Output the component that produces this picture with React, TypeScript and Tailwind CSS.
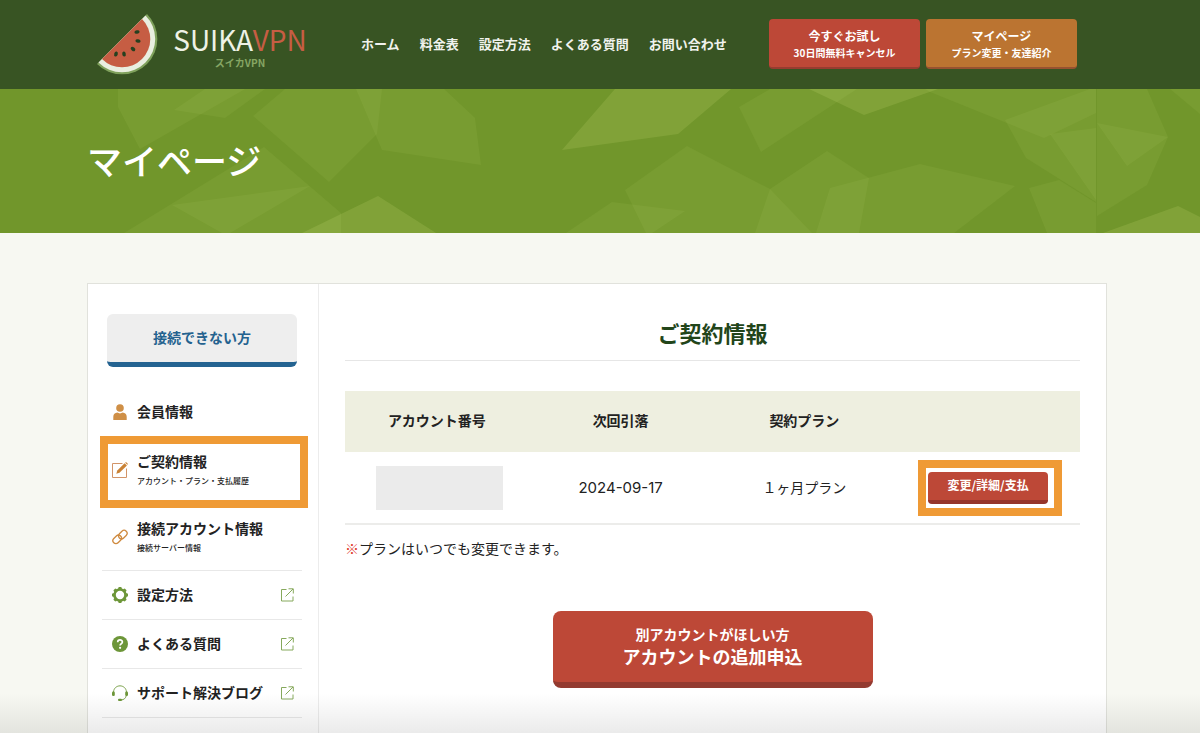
import { type ReactNode } from 'react';

const NAV_ITEMS = ['ホーム', '料金表', '設定方法', 'よくある質問', 'お問い合わせ'];

/** ヘッダー下の多角形模様 */
const BANNER_SHAPES = [
  '118,0 118,18 140,60 245,0',
  '205,0 174,21 225,29 265,0',
  '285,0 253,27 329,93 377,45 382,0',
  '356,0 382,61 481,76 475,29 444,0',
  '124,144 264,58 341,124 341,144',
  '172,116 310,97 230,144 222,144',
  '566,144 612,113 685,122 652,144',
  '739,18 770,0 857,0 761,63',
  '625,101 687,57 770,100 812,144 646,144',
  '755,144 770,100 827,62 869,89 859,144',
  '816,144 830,99 920,75 1015,97 954,144',
  '925,0 930,3 1044,49 1096,24 1096,0',
  '1005,31 1090,0 1096,0 1096,113 1026,69',
  '1050,45 1096,39 1096,111',
  '1029,99 1059,91 1096,114 1096,144 1047,144',
  '1097,0 1147,0 1168,48 1147,96 1097,127',
  '1097,34 1168,48 1127,77',
  '1170,0 1200,25 1200,0',
];

const BANNER_BRIGHT_SHAPES = [
  '302,144 378,107 436,144',
  '562,61 615,0 731,0 678,45',
  '809,0 864,26 938,0',
  '1103,144 1178,117 1200,128 1200,144',
];

const SEEDS = [
  { x: 41, y: 19, r: -10 },
  { x: 42, y: 28, r: 10 },
  { x: 37, y: 36, r: 40 },
  { x: 28, y: 41, r: 80 },
  { x: 20, y: 41, r: 105 },
];

const Melon = () => (
  <svg viewBox="0 0 62 62" className="size-[62px] shrink-0" aria-hidden="true">
    <path d="M1 51A35.2 35.2 0 0 0 51 1Z" fill="#7fa15c" />
    <path d="M2.5 49.5A33 33 0 0 0 49.5 2.5Z" fill="#e9eee0" />
    <path d="M6 46A28 28 0 0 0 46 6Z" fill="#c65d43" />
    {SEEDS.map((s) => (
      <ellipse
        key={`${s.x}-${s.y}`}
        cx={s.x}
        cy={s.y}
        rx="2.6"
        ry="1.8"
        fill="#26401f"
        transform={`rotate(${s.r} ${s.x} ${s.y})`}
      />
    ))}
  </svg>
);

const UserIcon = () => (
  <svg viewBox="0 0 16 16" className="size-4" fill="#cf8f46" aria-hidden="true">
    <circle cx="8" cy="4" r="3.8" />
    <path d="M1.3 16v-3.2c0-2.4 1.6-4 4-4.2.8.5 1.7.8 2.7.8s1.9-.3 2.7-.8c2.4.2 4 1.8 4 4.2V16z" />
  </svg>
);

const EditIcon = () => (
  <svg viewBox="0 0 16 16" className="size-4" aria-hidden="true">
    <path d="M10.5 1.5H.5v14h14V6.5" fill="none" stroke="#d29468" />
    <path d="M4.3 11.7l1-3.2 7.300-7.300 2.300 2.200-7.400 7.300z" fill="#c98236" />
    <path d="M13.200.7l.8-.7 2 2-.7.8z" fill="#c98236" />
  </svg>
);

const LinkIcon = () => (
  <svg viewBox="0 0 16 16" className="size-4" fill="none" stroke="#cf8a3f" strokeWidth="1.3" aria-hidden="true">
    <rect x="6" y="2.600" width="9.600" height="6" rx="3" transform="rotate(-45 10.800 5.600)" />
    <rect x=".4" y="7.400" width="9.600" height="6" rx="3" transform="rotate(-45 5.200 10.400)" />
  </svg>
);

const GearIcon = () => (
  <svg viewBox="0 0 16 16" className="size-4" aria-hidden="true">
    <circle cx="8" cy="8" r="5.500" fill="none" stroke="#6d9639" strokeWidth="2.600" />
    {[0, 45, 90, 135, 180, 225, 270, 315].map((angle) => (
      <path key={angle} d="M6 2L6.700 0h2.600L10 2z" fill="#6d9639" transform={`rotate(${angle} 8 8)`} />
    ))}
  </svg>
);

const QuestionIcon = () => (
  <svg viewBox="0 0 16 16" className="size-4" aria-hidden="true">
    <circle cx="8" cy="8" r="8" fill="#6d9639" />
    <path d="M5.700 6.200c0-3 4.700-2.900 4.700-.2 0 1.800-2.300 1.700-2.300 3.500" fill="none" stroke="#fff" strokeWidth="1.700" />
    <circle cx="8.100" cy="11.800" r="1.100" fill="#fff" />
  </svg>
);

const HeadsetIcon = () => (
  <svg viewBox="0 0 16 16" className="size-4" aria-hidden="true">
    <path d="M1.500 7C2.200-1.200 13.800-1.200 14.500 7M14.300 10.500c-.5 2.700-2.500 4.300-5 4.500" fill="none" stroke="#7ba24b" />
    <rect x="0" y="6.500" width="2.800" height="4.500" rx="1.200" fill="#6d9639" />
    <rect x="13.200" y="6.500" width="2.800" height="4.500" rx="1.200" fill="#6d9639" />
    <rect x="6" y="13.800" width="4" height="2.200" rx="1.100" fill="#6d9639" />
  </svg>
);

const ExternalIcon = () => (
  <svg viewBox="0 0 14 14" className="size-3.5" fill="none" stroke="#86a95c" aria-hidden="true">
    <path d="M6.500 1.500h-5v11.500h11.500V8.500M5.500 8.500l7.500-7.500M8.500.8h4.800V5.500" />
  </svg>
);

interface MenuItem {
  label: string;
  sub?: string;
  icon: ReactNode;
  external?: boolean;
  highlighted?: boolean;
}

const MENU_ITEMS: MenuItem[] = [
  { label: '会員情報', icon: <UserIcon /> },
  { label: 'ご契約情報', sub: 'アカウント・プラン・支払履歴', icon: <EditIcon />, highlighted: true },
  { label: '接続アカウント情報', sub: '接続サーバー情報', icon: <LinkIcon /> },
  { label: '設定方法', icon: <GearIcon />, external: true },
  { label: 'よくある質問', icon: <QuestionIcon />, external: true },
  { label: 'サポート解決ブログ', icon: <HeadsetIcon />, external: true },
];

const Header = () => (
  <header className="bg-[#385423] pr-1.5">
    <div className="mx-auto flex h-[89px] max-w-[1020px] items-center pr-[30px] pb-0.5 pl-[9px]">
      <a href="#" className="flex items-center gap-[14px] text-[#eef2e6]">
        <Melon />
        <span className="flex w-[136px] flex-col items-center pt-1.5">
          <span className="text-[28px] leading-8 whitespace-nowrap">
            SUIKA<span className="text-[#c65d43]">VPN</span>
          </span>
          <span className="text-[10px] leading-4 font-bold text-[#86a663]">スイカVPN</span>
        </span>
      </a>
      <nav className="ml-[53px] flex gap-5 text-[13px] font-bold whitespace-nowrap text-[#f0f2ed]">
        {NAV_ITEMS.map((item) => (
          <a key={item} href="#">
            {item}
          </a>
        ))}
      </nav>
      <div className="ml-auto flex gap-1.5 text-center font-bold text-white">
        <a
          href="#"
          className="flex h-[50px] w-[151px] flex-col justify-center rounded border-b-2 border-[#963c30] bg-[#bd4837] pt-0.5"
        >
          <span className="text-xs leading-[18px]">今すぐお試し</span>
          <span className="text-[10px] leading-4">30日間無料キャンセル</span>
        </a>
        <a
          href="#"
          className="flex h-[50px] w-[151px] flex-col justify-center rounded border-b-2 border-[#975230] bg-[#bb7431] pt-0.5"
        >
          <span className="text-xs leading-[18px]">マイページ</span>
          <span className="text-[10px] leading-4">プラン変更・友達紹介</span>
        </a>
      </div>
    </div>
  </header>
);

const Banner = () => (
  <div className="relative h-36 bg-[#71962b] pr-1.5">
    <svg
      viewBox="0 0 1200 144"
      preserveAspectRatio="xMidYMid slice"
      className="absolute inset-0 size-full"
      fill="#f4ff9a"
      aria-hidden="true"
    >
      {BANNER_SHAPES.map((points) => (
        <polygon key={points} points={points} fillOpacity="0.06" />
      ))}
      {BANNER_BRIGHT_SHAPES.map((points) => (
        <polygon key={points} points={points} fillOpacity="0.12" />
      ))}
    </svg>
    <div className="relative mx-auto flex h-full max-w-[1020px] items-center pb-0.5">
      <h1 className="text-[35px] leading-10 font-medium text-white">マイページ</h1>
    </div>
  </div>
);

const Sidebar = () => (
  <aside className="w-[231px] shrink-0 border-r border-[#ececec] pt-[30px]">
    <a
      href="#"
      className="mr-[21px] ml-[19px] flex h-[53px] items-center justify-center rounded-md border-b-[5px] border-[#246391] bg-[#eee] pb-0.5 text-sm font-bold text-[#24628f]"
    >
      接続できない方
    </a>
    <ul className="mt-[21px] ml-3.5 w-[200px]">
      {MENU_ITEMS.map((item) => (
        <li key={item.label} className="relative border-b border-[#e8e8e8] first:border-transparent">
          <a
            href="#"
            className={`flex items-center gap-[9px] pr-2 pl-2.5 text-[#222] ${item.sub ? 'h-[66px]' : 'h-12'}`}
          >
            {item.icon}
            <span className="flex flex-1 flex-col pb-0.5 whitespace-nowrap">
              <span className="text-sm leading-6 font-bold">{item.label}</span>
              {item.sub && <span className="text-[8px] leading-4 font-medium">{item.sub}</span>}
            </span>
            {item.external && <ExternalIcon />}
          </a>
          {item.highlighted && (
            <span className="pointer-events-none absolute -top-px -right-1.5 -bottom-[5px] -left-0.5 border-8 border-[#ef9a35]" />
          )}
        </li>
      ))}
    </ul>
  </aside>
);

const Contract = () => (
  <main className="min-w-0 flex-1 px-[26px] pt-7">
    <h2 className="border-b border-[#e6e6e6] pb-2 text-center text-[22px] leading-10 font-bold text-[#22451a]">
      ご契約情報
    </h2>
    <table className="mt-[30px] w-full table-fixed text-center text-sm text-[#222]">
      <thead>
        <tr className="h-[61px] bg-[#eeefe0] font-bold">
          <th scope="col" className="pb-1">アカウント番号</th>
          <th scope="col" className="pb-1">次回引落</th>
          <th scope="col" className="pb-1">契約プラン</th>
          <td />
        </tr>
      </thead>
      <tbody>
        <tr className="h-[72px] border-b-2 border-[#ececea]">
          <td className="pl-1.5">
            <div className="mx-auto h-11 w-[127px] bg-[#ebebeb]" />
          </td>
          <td className="font-['Inter',sans-serif] text-[15px]">2024-09-17</td>
          <td className="pb-0.5">１ヶ月プラン</td>
          <td>
            <span className="relative inline-block align-middle">
              <button
                type="button"
                className="block h-8 w-[120px] rounded border-b-4 border-[#95352b] bg-[#bd4837] pb-0.5 text-xs font-bold text-white"
              >
                変更/詳細/支払
              </button>
              <span className="pointer-events-none absolute -top-3 -right-3.5 -bottom-3 -left-2.5 border-8 border-[#ef9a35]" />
            </span>
          </td>
        </tr>
      </tbody>
    </table>
    <p className="mt-[11px] text-sm leading-6 text-[#222]">
      <span className="text-[#e03a2c]">※</span>プランはいつでも変更できます。
    </p>
    <button
      type="button"
      className="mx-auto mt-[51px] flex h-[77px] w-80 flex-col items-center justify-center rounded-lg border-b-[6px] border-[#933a30] bg-[#bd4837] pb-0.5 font-bold text-white"
    >
      <span className="text-sm leading-5">別アカウントがほしい方</span>
      <span className="text-lg leading-6">アカウントの追加申込</span>
    </button>
  </main>
);

const App = () => {
  return (
    <div className="relative flex min-h-screen flex-col bg-[#f7f8f2] font-['Noto_Sans_CJK_JP',sans-serif]">
      <Header />
      <Banner />
      <div className="flex flex-1 flex-col pt-[50px] pr-1.5">
        <div className="mx-auto flex w-full max-w-[1020px] flex-1 border border-b-0 border-[#e1e2dc] bg-white">
          <Sidebar />
          <Contract />
        </div>
      </div>
      {/* 画面下端のフェード */}
      <div className="pointer-events-none absolute inset-x-0 bottom-0 h-10 bg-linear-to-t from-black/8 to-transparent" />
    </div>
  );
};

export default App;
